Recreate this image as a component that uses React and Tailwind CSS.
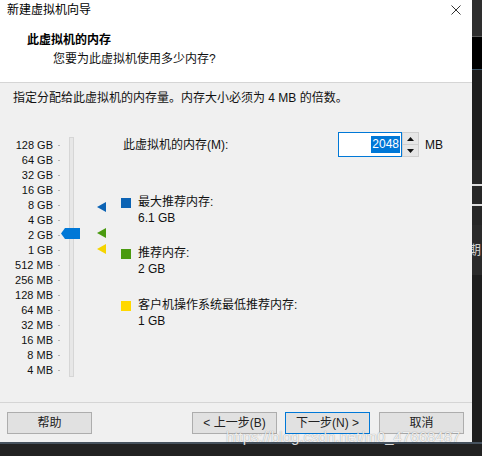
const sizes = ['128 GB', '64 GB', '32 GB', '16 GB', '8 GB', '4 GB', '2 GB', '1 GB', '512 MB', '256 MB', '128 MB', '64 MB', '32 MB', '16 MB', '8 MB', '4 MB'];

const cjk = "font-['Liberation_Sans','Noto_Sans_CJK_SC',sans-serif]";

function Marker({ color }) {
  return (
    <svg width="9" height="10" viewBox="0 0 9 10">
      <polygon points="0,5 9,0 9,10" fill={color} />
    </svg>
  );
}

function Legend({ color, label, value, className }) {
  return (
    <div className={`flex ${className}`}>
      <div className="w-[10px] h-[10px] mt-[4px]" style={{ background: color }} />
      <div className="ml-[7px] text-[12px] leading-[16px] text-[#111]">
        <div>{label}</div>
        <div>{value}</div>
      </div>
    </div>
  );
}

function Button({ children, focus, className = '' }) {
  return (
    <div
      className={`w-[85px] h-[22px] flex items-center justify-center text-[12px] text-[#222] bg-[#e1e1e1] border ${focus ? 'border-[#0078d7]' : 'border-[#adadad]'} ${className}`}
    >
      {children}
    </div>
  );
}

export default function App() {
  return (
    <div className={`relative w-[482px] h-[456px] bg-[#1f1f1f] flex flex-col overflow-hidden ${cjk}`}>
      <div className="flex h-[442px]">
        {/* dialog */}
        <div className="w-[472px] flex flex-col bg-white">
          <div className="h-[21px] flex items-center justify-between pl-[7px] pr-[11px]">
            <span className="text-[12px] leading-[21px] text-black">新建虚拟机向导</span>
            <svg width="10" height="10" viewBox="0 0 10 10" className="mt-[-1px]">
              <path d="M0.5 0.5 L9.5 9.5 M9.5 0.5 L0.5 9.5" stroke="#333" strokeWidth="1" />
            </svg>
          </div>
          <div className="h-[62px] border-b border-[#d5d5d5] pt-[11px]">
            <div className="pl-[27px] text-[12px] leading-[16px] font-bold text-black">此虚拟机的内存</div>
            <div className="pl-[53px] mt-[3px] text-[12px] leading-[16px] text-[#111]">您要为此虚拟机使用多少内存?</div>
          </div>

          <div className="flex-1 bg-[#f0f0f0]">
            <div className="pl-[13px] pt-[8px] text-[12px] leading-[14px] text-[#111]">
              指定分配给此虚拟机的内存量。内存大小必须为 4 MB 的倍数。
            </div>

            <div className="flex mt-[27px]">
              {/* slider */}
              <div className="relative w-[121px] pt-[6px] flex">
                <div className="w-[53px] flex flex-col font-['Liberation_Sans',sans-serif] text-[11px] text-[#111]">
                  {sizes.map((s) => (
                    <div key={s} className="h-[15px] leading-[15px] text-right">{s}</div>
                  ))}
                </div>
                <div className="ml-[5px] w-[2px] flex flex-col">
                  {sizes.map((s) => (
                    <div key={s} className="h-[15px] flex items-center">
                      <div className="w-[2px] h-[1px] bg-[#b5b5b5]" />
                    </div>
                  ))}
                </div>
                <div className="ml-[9px] mt-[-1px] w-[5px] h-[240px] bg-[#e7e7e7] border border-[#d6d6d6]" />
                <svg width="19" height="11" viewBox="0 0 19 11" className="absolute left-[61px] top-[96px]">
                  <polygon points="0,5.5 4,0 19,0 19,11 4,11" fill="#0078d7" />
                </svg>
                <div className="absolute left-[97px] top-[70px]"><Marker color="#0c63b4" /></div>
                <div className="absolute left-[97px] top-[96px]"><Marker color="#4a9a10" /></div>
                <div className="absolute left-[97px] top-[112px]"><Marker color="#f5d400" /></div>
              </div>

              {/* values */}
              <div className="flex flex-col">
                <div className="flex items-center h-[25px]">
                  <div className="ml-[2px] w-[215px] text-[12px] text-[#111]">此虚拟机的内存(M):</div>
                  <div className="w-[64px] h-[25px] bg-white border border-[#0078d7] flex items-center justify-end pr-[1px]">
                    <span className="bg-[#0078d7] text-white text-[12px] leading-[17px] px-[1px]">2048</span>
                  </div>
                  <div className="w-[17px] h-[25px] flex flex-col bg-[#e6e6e6] border border-[#cfcfcf]">
                    <div className="flex-1 flex items-center justify-center border-b border-[#cfcfcf]">
                      <svg width="7" height="4" viewBox="0 0 7 4"><polygon points="3.5,0 7,4 0,4" fill="#111" /></svg>
                    </div>
                    <div className="flex-1 flex items-center justify-center">
                      <svg width="7" height="4" viewBox="0 0 7 4"><polygon points="0,0 7,0 3.5,4" fill="#111" /></svg>
                    </div>
                  </div>
                  <div className="ml-[6px] text-[12px] text-[#111]">MB</div>
                </div>

                <Legend className="mt-[37px]" color="#0c63b4" label="最大推荐内存:" value="6.1 GB" />
                <Legend className="mt-[19px]" color="#4a9a10" label="推荐内存:" value="2 GB" />
                <Legend className="mt-[20px]" color="#ffd800" label="客户机操作系统最低推荐内存:" value="1 GB" />
              </div>
            </div>
          </div>

          <div className="h-[40px] bg-[#f0f0f0] border-t border-[#d5d5d5] flex items-start pt-[9px] pl-[7px] pr-[8px]">
            <Button>帮助</Button>
            <Button className="ml-[100px]">&lt; 上一步(B)</Button>
            <Button focus className="ml-[8px]">下一步(N) &gt;</Button>
            <Button className="ml-[9px]">取消</Button>
          </div>
        </div>

        {/* background window strip */}
        <div className="w-[10px] flex flex-col">
          <div className="h-[36px] bg-[#2e2e2e]" />
          <div className="h-[1px] bg-[#5a5a5a]" />
          <div className="h-[32px] bg-black" />
          <div className="h-[1px] bg-[#3c5568]" />
          <div className="h-[90px] bg-[#1e1e1e]" />
          <div className="h-[65px] bg-[#262626] flex flex-col pt-[24px] gap-[18px]">
            <div className="h-[2px] bg-[#dcdcdc]" />
            <div className="h-[2px] bg-[#dcdcdc]" />
          </div>
          <div className="h-[50px] bg-[#2a2a2a] overflow-hidden flex items-center">
            <span className="ml-[-4px] text-[13px] text-[#cfcfcf]">期</span>
          </div>
          <div className="flex-1 bg-[#1e1e1e]" />
        </div>
      </div>
      <div className="flex-1 border-t-2 border-[#46525e] bg-[#222]" />

      <div className="absolute left-[226px] top-[428px] font-['Liberation_Sans',sans-serif] text-[15px] leading-[18px] text-white/85 [text-shadow:0_0_1px_rgba(0,0,0,0.45)] whitespace-nowrap">
        https://blog.csdn.net/m0_47668487
      </div>
    </div>
  );
}
